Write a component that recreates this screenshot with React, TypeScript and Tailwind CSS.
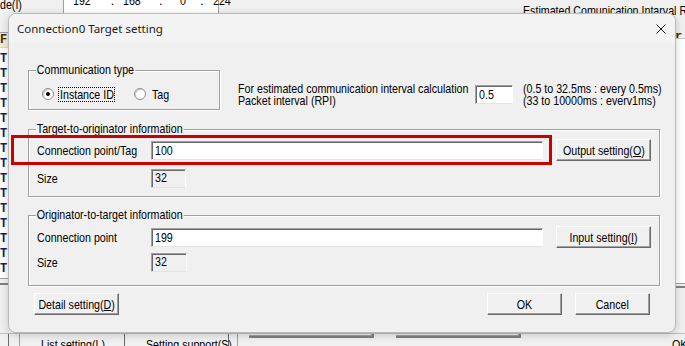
import React from 'react';

// condensed look of the classic dialog font: Arial metrics squeezed horizontally
function N({ children, className = 'origin-left' }: { children: React.ReactNode; className?: string }) {
  return <span className={`inline-block whitespace-nowrap scale-x-[0.82] ${className}`}>{children}</span>;
}

function Btn({ children, className = '' }: { children: React.ReactNode; className?: string }) {
  return (
    <div className={`flex shrink-0 items-center justify-center h-[22px] bg-[#f0f0f0] border border-t-white border-l-white border-r-[#696969] border-b-[#696969] shadow-[inset_-1px_-1px_0_#a0a0a0] ${className}`}>
      <N className="origin-center shrink-0">{children}</N>
    </div>
  );
}

function Field({ value, className = '', disabled = false }: { value: string; className?: string; disabled?: boolean }) {
  return (
    <div className={`flex shrink-0 h-[19px] pl-[3px] border border-t-[#a0a0a0] border-l-[#a0a0a0] border-r-white border-b-[#e3e3e3] shadow-[inset_1px_1px_0_#696969] ${disabled ? 'bg-[#f0f0f0] items-start pt-[1px]' : 'bg-white items-center'} ${className}`}>
      <N>{value}</N>
    </div>
  );
}

function Group({ label, className = '', children }: { label: string; className?: string; children: React.ReactNode }) {
  return (
    <div className={`relative border border-[#a0a0a0] shadow-[inset_1px_1px_0_#fff,1px_1px_0_#fff] ${className}`}>
      <span className="absolute -top-[8px] left-[7px] px-[1px] bg-[#f0f0f0] leading-[14px] whitespace-nowrap origin-left scale-x-[0.82]">{label}</span>
      {children}
    </div>
  );
}

function Radio({ checked = false }: { checked?: boolean }) {
  return (
    <span className="relative block shrink-0 w-[12px] h-[12px] rounded-full border border-[#8c8c8c] bg-white shadow-[inset_1px_1px_0_#d0d0d0]">
      {checked && <span className="absolute left-[3px] top-[3px] w-[4px] h-[4px] rounded-full bg-black" />}
    </span>
  );
}

function Label({ children }: { children: React.ReactNode }) {
  return (
    <span className="w-[114px] shrink-0">
      <N>{children}</N>
    </span>
  );
}

export default function App() {
  const rows = Array.from({ length: 15 });

  return (
    <div className="relative w-[685px] h-[346px] overflow-hidden bg-[#f0f0f0] text-black text-[13px] leading-[13px] font-['Liberation_Sans',Arial,sans-serif]">
      {/* background window */}
      <div className="flex items-start h-[32px]">
        <span className="w-[63px] shrink-0 -mt-[2px]">
          <N>de(I)</N>
        </span>
        <div className="w-[156px] shrink-0 h-[19px] bg-white border-x border-[#a0a0a0] flex items-start -mt-[6px] pl-[9px]">
          <N>192</N>
          <span className="ml-[16px]">.</span>
          <span className="ml-[9px]"><N>168</N></span>
          <span className="ml-[14px]">.</span>
          <span className="ml-[17px]"><N>0</N></span>
          <span className="ml-[13px]">.</span>
          <span className="ml-[9px]"><N>224</N></span>
        </div>
        <span className="ml-[304px] mt-[4px]">
          <N>Estimated Comunication Intarval R</N>
        </span>
      </div>

      <div className="flex h-[301px]">
        <div className="w-[8px] flex flex-col border-t border-[#a0a0a0]">
          <div className="h-[14px] bg-[#f3ecd2] font-['Liberation_Mono',monospace] font-bold text-[12px] leading-[14px] text-[#4a2d00]">F</div>
          <div className="h-[231px] bg-white border-t border-[#d8d8d8] pt-[4px]">
            {rows.map((_, i) => (
              <div key={i} className="h-[15px] flex items-center font-['Liberation_Mono',monospace] font-bold text-[12px] text-[#1c1c5c]">
                T<span className="text-[#c06a2a] text-[9px]">:</span>
              </div>
            ))}
          </div>
          <div className="h-[7px] border-t border-[#a0a0a0] border-b-2 border-b-[#808080]" />
        </div>
        <div className="ml-auto w-[10px] flex flex-col">
          <div className="h-[6px] font-['Liberation_Mono',monospace] font-bold text-[12px] leading-[10px] text-[#4a2d00] overflow-hidden">r</div>
          <div className="h-[245px] bg-white border-t border-[#c8c8c8]" />
          <div className="h-[5px] border-t border-[#a0a0a0] border-b-2 border-b-[#808080]" />
        </div>
      </div>

      <div className="flex items-start h-[13px] border-t border-[#c0c0c0]">
        <div className="w-[9px] shrink-0 h-full border-r border-[#696969]" />
        <div className="w-[11px] shrink-0 h-full border-r border-[#a0a0a0]" />
        <div className="w-[105px] shrink-0 h-full border-r border-[#696969] pl-[21px] pt-[4px]"><N>List setting(L)</N></div>
        <div className="w-[104px] shrink-0 h-full border-r border-[#696969] pl-[21px] pt-[4px]"><N>Setting support(S)</N></div>
        <div className="w-[9px] shrink-0 h-full border-r border-[#a0a0a0]" />
        <div className="ml-[11px] w-[125px] shrink-0 h-[4px] border-b-2 border-r-2 border-[#808080] shadow-[inset_-1px_-1px_0_#a0a0a0]" />
        <div className="ml-[22px] w-[125px] shrink-0 h-[4px] border-b-2 border-r-2 border-[#808080] shadow-[inset_-1px_-1px_0_#a0a0a0]" />
        <div className="ml-auto pt-[4px] w-[13px] overflow-hidden"><N>OK</N></div>
      </div>

      {/* dialog */}
      <div className="absolute left-[8px] top-[13px] w-[668px] h-[320px] flex flex-col rounded-[8px] border border-[#b9b9b9] bg-[#f0f0f0] shadow-[0_2px_8px_rgba(0,0,0,0.18)] overflow-hidden">
        <div className="h-[29px] flex items-center justify-between pl-[8px] pr-[9px] bg-[#f3f3f3]">
          <span className="font-['Noto_Sans',sans-serif] text-[11.5px] leading-none text-[#1a1a1a]">Connection0 Target setting</span>
          <svg width="10" height="10" viewBox="0 0 10 10" className="block">
            <path d="M0.5 0.5 L9.5 9.5 M9.5 0.5 L0.5 9.5" stroke="#1a1a1a" strokeWidth="1" fill="none" />
          </svg>
        </div>

        <div className="relative flex-1 pl-[19px] pr-[15px] pt-[27px]">
          <div className="flex items-start">
            <Group label="Communication type" className="w-[192px] shrink-0 h-[40px] pt-[8px]">
              <div className="flex items-center h-[30px] pl-[13px]">
                <Radio checked />
                <span className="ml-[4px] w-[57px] shrink-0 h-[15px] flex items-center border border-dotted border-black pl-[1px]">
                  <N>Instance ID</N>
                </span>
                <span className="ml-[19px]"><Radio /></span>
                <span className="ml-[6px]"><N>Tag</N></span>
              </div>
            </Group>
            <div className="ml-[18px] mt-[13px] w-[237px] shrink-0 leading-[12px]">
              <div><N>For estimated communication interval calculation</N></div>
              <div><N>Packet interval (RPI)</N></div>
            </div>
            <Field value="0.5" className="mt-[15px] w-[38px]" />
            <div className="ml-[10px] mt-[13px] leading-[12px]">
              <div><N>(0.5 to 32.5ms : every 0.5ms)</N></div>
              <div><N>(33 to 10000ms : everv1ms)</N></div>
            </div>
          </div>

          <Group label="Target-to-originator information" className="mt-[19px] pt-[9px] pb-[8px] pl-[8px] pr-[8px]">
            <div className="flex items-center h-[22px]">
              <Label>Connection point/Tag</Label>
              <Field value="100" className="w-[392px]" />
              <Btn className="ml-[13px] w-[95px]">Output setting(<u>O</u>)</Btn>
            </div>
            <div className="flex items-center h-[19px] mt-[8px]">
              <Label>Size</Label>
              <Field value="32" disabled className="w-[35px]" />
            </div>
          </Group>

          <Group label="Originator-to-target information" className="mt-[18px] pt-[10px] pb-[13px] pl-[8px] pr-[8px]">
            <div className="flex items-center h-[22px]">
              <Label>Connection point</Label>
              <Field value="199" className="w-[392px]" />
              <Btn className="ml-[13px] w-[95px]">Input setting(<u>I</u>)</Btn>
            </div>
            <div className="flex items-center h-[19px] mt-[5px]">
              <Label>Size</Label>
              <Field value="32" disabled className="w-[36px]" />
            </div>
          </Group>

          <div className="flex items-center mt-[7px] pl-[6px] pr-[10px]">
            <Btn className="w-[85px]">Detail setting(<u>D</u>)</Btn>
            <Btn className="ml-auto w-[75px]">OK</Btn>
            <Btn className="ml-[13px] w-[75px]">Cancel</Btn>
          </div>

          {/* highlight annotation */}
          <div className="absolute left-[2px] top-[92px] w-[541px] h-[30px] border-[3px] border-[#cc0000] pointer-events-none" />
        </div>
      </div>
    </div>
  );
}
